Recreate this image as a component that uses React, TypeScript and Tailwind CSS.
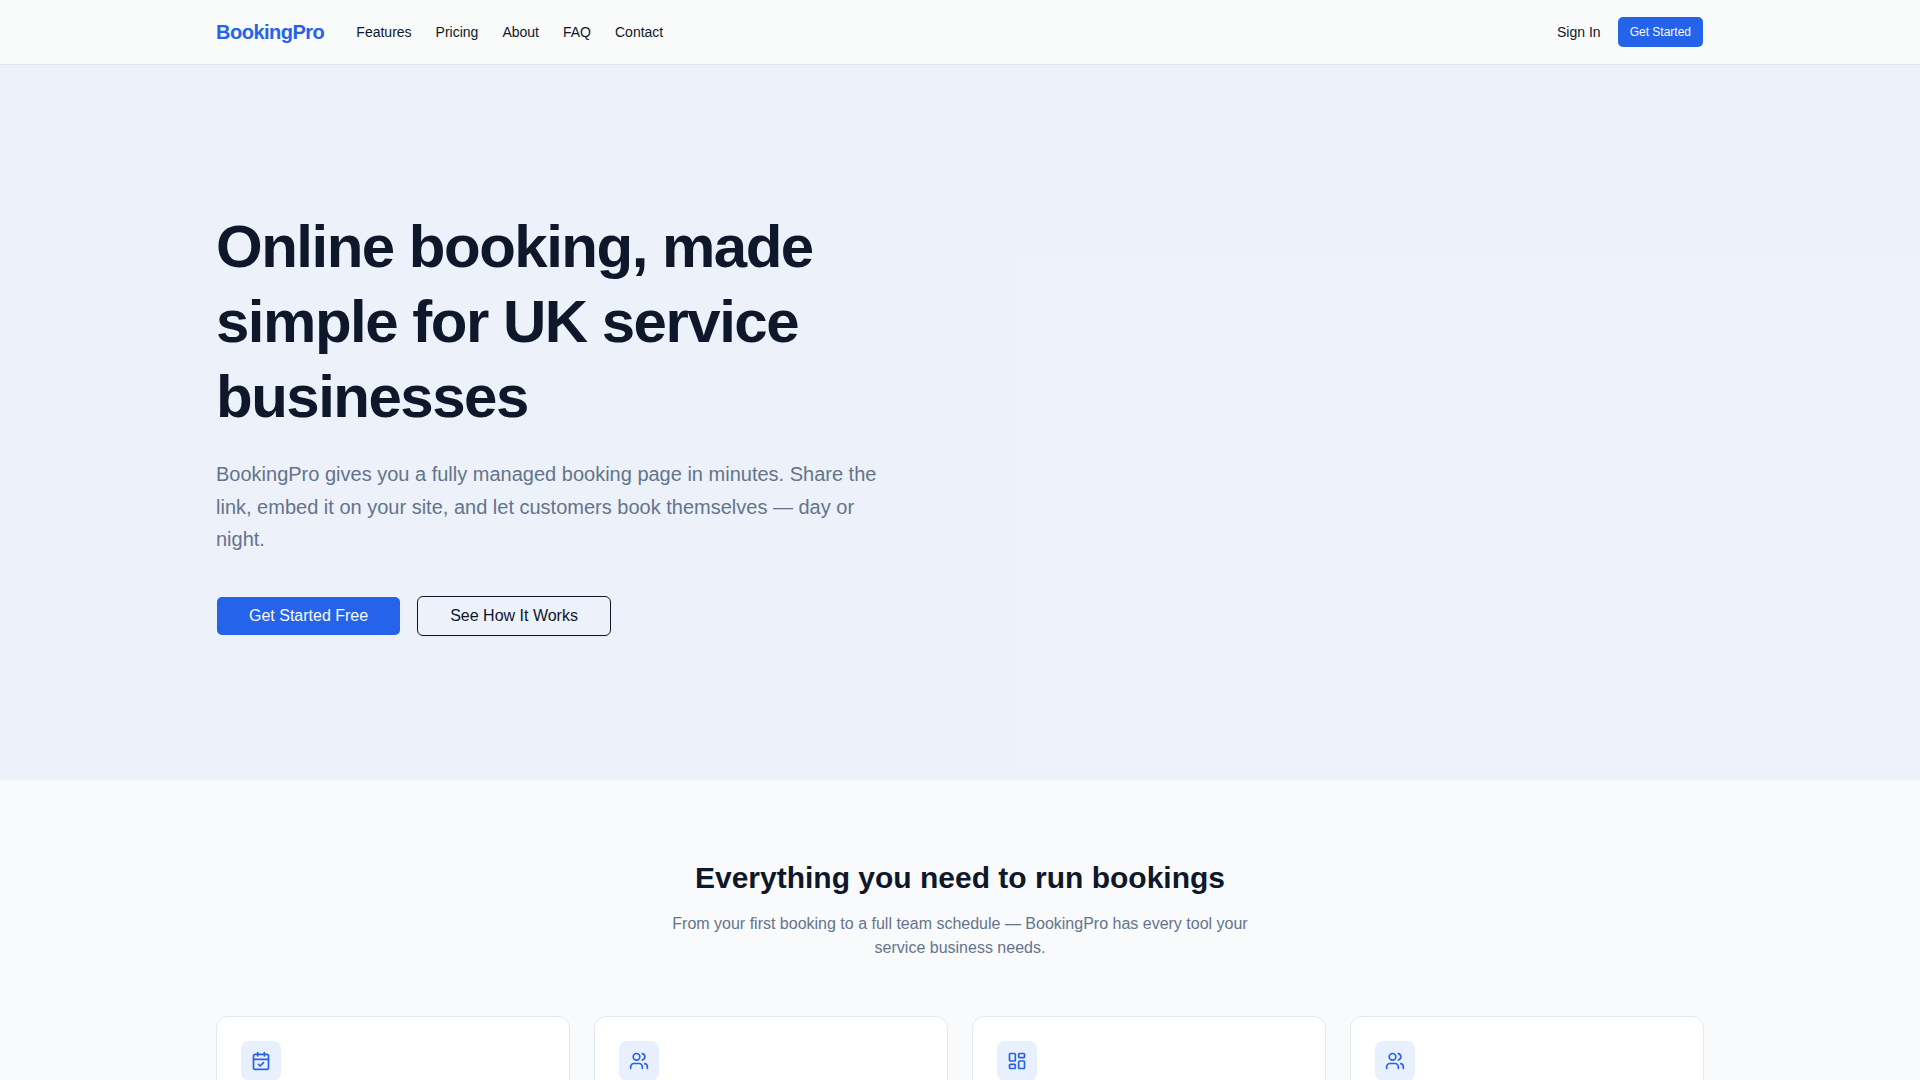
import { CalendarCheck, LayoutDashboard, Users } from "lucide-react";

const navLinks = ["Features", "Pricing", "About", "FAQ", "Contact"];

const features = [
  { id: "booking", Icon: CalendarCheck },
  { id: "customers", Icon: Users },
  { id: "dashboard", Icon: LayoutDashboard },
  { id: "team", Icon: Users },
];

function Header() {
  return (
    <header className="border-b border-[#dfe6f1] bg-[#f9fbfa]">
      <div className="mx-auto flex h-16 max-w-[1536px] items-center justify-between px-6">
        <div className="flex items-center gap-8">
          <a href="#" className="text-xl font-bold tracking-tight text-[#2563eb]">
            BookingPro
          </a>
          <nav className="flex items-center gap-6 text-sm">
            {navLinks.map((label) => (
              <a key={label} href="#">
                {label}
              </a>
            ))}
          </nav>
        </div>
        <div className="flex items-center gap-4">
          <a href="#" className="text-sm">
            Sign In
          </a>
          <button
            type="button"
            className="h-8 rounded-md border border-transparent bg-[#2563eb] bg-clip-padding px-3 text-xs text-slate-50"
          >
            Get Started
          </button>
        </div>
      </div>
    </header>
  );
}

function Hero() {
  return (
    <section className="relative bg-[#ecf1fa]">
      <div aria-hidden="true" className="absolute right-0 bottom-4 h-[508px] w-[47%] bg-[#edf2fb]" />
      <div className="relative mx-auto grid min-h-[715px] max-w-[1536px] grid-cols-2 items-center gap-16 px-6">
        <div>
          <h1 className="text-6xl leading-tight font-bold tracking-tight">
            Online booking, made simple for UK service businesses
          </h1>
          <p className="mt-6 max-w-2xl text-xl leading-relaxed text-[#64748b]">
            BookingPro gives you a fully managed booking page in minutes. Share the link, embed it on
            your site, and let customers book themselves — day or night.
          </p>
          <div className="mt-10 flex gap-4">
            <button
              type="button"
              className="h-10 rounded-md border border-transparent bg-[#2563eb] bg-clip-padding px-8 text-slate-50"
            >
              Get Started Free
            </button>
            <button
              type="button"
              className="h-10 rounded-md border border-[#0f172a] px-8 shadow-xs"
            >
              See How It Works
            </button>
          </div>
        </div>
      </div>
    </section>
  );
}

function Features() {
  return (
    <section className="bg-[#f9fafc] pt-20">
      <div className="mx-auto max-w-[1536px] px-6">
        <div className="mx-auto max-w-xl text-center">
          <h2 className="text-3xl font-bold">Everything you need to run bookings</h2>
          <p className="mx-auto mt-4 text-[#64748b]">
            From your first booking to a full team schedule — BookingPro has every tool your service
            business needs.
          </p>
        </div>
        <div className="mt-14 grid grid-cols-4 gap-6">
          {features.map(({ id, Icon }) => (
            <article key={id} className="min-h-52 rounded-xl border border-slate-200 bg-white p-6">
              <div className="flex size-10 items-center justify-center rounded-lg bg-[#e8effd] text-[#2563eb]">
                <Icon className="size-5" />
              </div>
            </article>
          ))}
        </div>
      </div>
    </section>
  );
}

export default function App() {
  return (
    <div className="min-h-screen bg-[#f9fafc] font-['Liberation_Sans',Arial,sans-serif] text-[#0f172a]">
      <Header />
      <Hero />
      <Features />
    </div>
  );
}
